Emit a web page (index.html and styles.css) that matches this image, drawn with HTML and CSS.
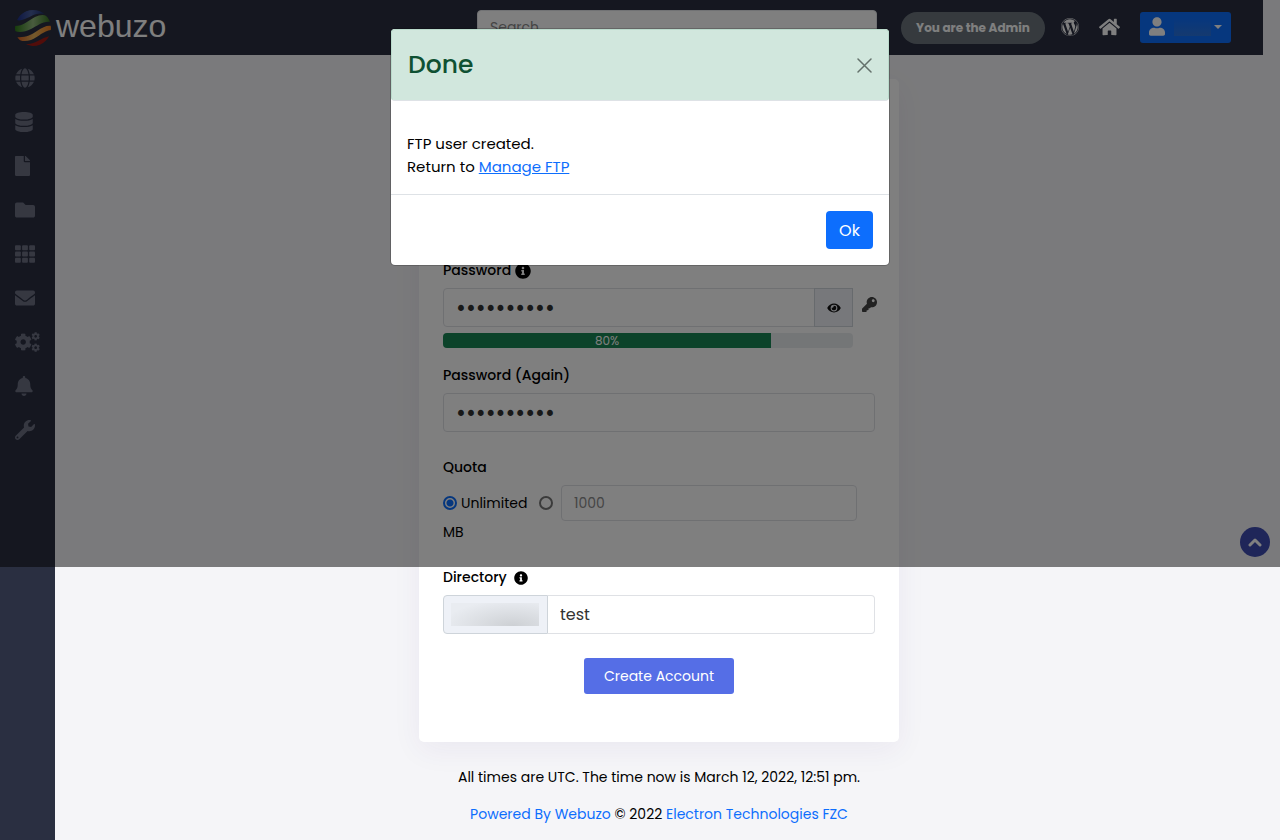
FILE: index.html
```
<!DOCTYPE html>
<html lang="en">
<head>
    <meta charset="UTF-8">
    <meta name="viewport" content="width=device-width, initial-scale=1.0">
    <title>Add FTP Account</title>
    <link rel="stylesheet" href="styles.css">
</head>
<body>
    <!-- icons used more than once or too long to keep in the markup -->
    <svg class="sprite" aria-hidden="true">
        <symbol id="globe" viewBox="0 0 496 512"><path d="M336.500 160C322 70.700 287.800 8 248 8s-74 62.700-88.500 152h177zM152 256c0 22.200 1.200 43.500 3.300 64h185.300c2.100-20.500 3.300-41.800 3.300-64s-1.200-43.500-3.300-64H155.300c-2.100 20.500-3.300 41.800-3.300 64zm324.700-96c-28.600-67.900-86.500-120.400-158-141.600 24.400 33.800 41.200 84.700 50 141.600h108zM177.200 18.400C105.800 39.600 47.800 92.100 19.300 160h108c8.700-56.900 25.500-107.800 49.900-141.600zM487.400 192H372.700c2.100 21 3.300 42.500 3.300 64s-1.200 43-3.300 64h114.600c5.500-20.500 8.600-41.800 8.600-64s-3.100-43.500-8.500-64zM120 256c0-21.500 1.200-43 3.300-64H8.600C3.200 212.500 0 233.800 0 256s3.200 43.500 8.600 64h114.600c-2-21-3.200-42.500-3.200-64zm39.500 96c14.500 89.300 48.700 152 88.500 152s74-62.700 88.500-152h-177zm159.300 141.600c71.400-21.200 129.400-73.700 158-141.600h-108c-8.800 56.900-25.600 107.800-50 141.600zM19.300 352c28.600 67.900 86.500 120.400 158 141.600-24.400-33.800-41.200-84.700-50-141.600h-108z"/></symbol>
        <symbol id="database" viewBox="0 0 448 512"><path d="M448 73.143v45.714C448 159.143 347.667 192 224 192S0 159.143 0 118.857V73.143C0 32.857 100.333 0 224 0s224 32.857 224 73.143zM448 176v102.857C448 319.143 347.667 352 224 352S0 319.143 0 278.857V176c48.125 33.143 136.208 48.572 224 48.572S399.874 209.143 448 176zm0 160v102.857C448 479.143 347.667 512 224 512S0 479.143 0 438.857V336c48.125 33.143 136.208 48.572 224 48.572S399.874 369.143 448 336z"/></symbol>
        <symbol id="file" viewBox="0 0 384 512"><path d="M224 136V0H24C10.700 0 0 10.700 0 24v464c0 13.300 10.700 24 24 24h336c13.300 0 24-10.700 24-24V160H248c-13.200 0-24-10.800-24-24zm160-14.100v6.100H256V0h6.100c6.400 0 12.500 2.500 17 7l97.900 98c4.500 4.500 7 10.600 7 16.900z"/></symbol>
        <symbol id="folder" viewBox="0 0 512 512"><path d="M464 128H272l-64-64H48C21.490 64 0 85.490 0 112v288c0 26.510 21.490 48 48 48h416c26.510 0 48-21.490 48-48V176c0-26.510-21.490-48-48-48z"/></symbol>
        <symbol id="grid" viewBox="0 0 512 512"><rect y="32" width="149" height="128" rx="24"/><rect x="181" y="32" width="149" height="128" rx="24"/><rect x="363" y="32" width="149" height="128" rx="24"/><rect y="192" width="149" height="128" rx="24"/><rect x="181" y="192" width="149" height="128" rx="24"/><rect x="363" y="192" width="149" height="128" rx="24"/><rect y="352" width="149" height="128" rx="24"/><rect x="181" y="352" width="149" height="128" rx="24"/><rect x="363" y="352" width="149" height="128" rx="24"/></symbol>
        <symbol id="envelope" viewBox="0 0 512 512"><path d="M502.300 190.800c3.900-3.100 9.700-.2 9.700 4.700V400c0 26.500-21.500 48-48 48H48c-26.500 0-48-21.500-48-48V195.600c0-5 5.700-7.800 9.700-4.700 22.400 17.400 52.100 39.500 154.100 113.600 21.100 15.400 56.700 47.800 92.200 47.600 35.700.3 72-32.800 92.300-47.600 102-74.100 131.600-96.300 154-113.700zM256 320c23.200.4 56.600-29.200 73.400-41.400 132.700-96.300 142.800-104.700 173.400-128.700 5.800-4.500 9.200-11.500 9.200-18.900v-19c0-26.500-21.500-48-48-48H48c-26.500 0-48 21.500-48 48v19c0 7.400 3.400 14.300 9.200 18.900 30.600 23.900 40.700 32.400 173.400 128.700 16.800 12.200 50.200 41.800 73.400 41.400z"/></symbol>
        <symbol id="cog" viewBox="0 0 512 512"><path d="M487.400 315.700l-42.600-24.600c4.300-23.200 4.300-47 0-70.200l42.600-24.600c4.900-2.800 7.100-8.600 5.500-14-11.100-35.600-30-67.800-54.700-94.600-3.800-4.100-10-5.100-14.800-2.300L380.800 110c-17.900-15.400-38.500-27.300-60.800-35.100V25.800c0-5.600-3.900-10.500-9.400-11.700-36.700-8.200-74.300-7.800-109.200 0-5.500 1.200-9.400 6.100-9.400 11.700V75c-22.200 7.900-42.800 19.800-60.800 35.100L88.700 85.500c-4.900-2.800-11-1.900-14.800 2.300-24.700 26.700-43.600 58.900-54.700 94.600-1.700 5.400.6 11.200 5.500 14L67.300 221c-4.300 23.200-4.300 47 0 70.200l-42.600 24.600c-4.900 2.800-7.100 8.600-5.500 14 11.100 35.600 30 67.800 54.700 94.600 3.800 4.100 10 5.100 14.800 2.300l42.600-24.600c17.900 15.400 38.500 27.300 60.800 35.100v49.200c0 5.600 3.900 10.500 9.400 11.700 36.700 8.200 74.300 7.800 109.200 0 5.500-1.200 9.400-6.100 9.400-11.700v-49.200c22.200-7.900 42.800-19.800 60.800-35.100l42.600 24.600c4.900 2.800 11 1.900 14.800-2.300 24.700-26.700 43.600-58.900 54.700-94.600 1.500-5.500-.7-11.300-5.600-14.100zM256 336c-44.100 0-80-35.900-80-80s35.900-80 80-80 80 35.900 80 80-35.900 80-80 80z"/></symbol>
        <symbol id="cogs" viewBox="0 0 640 512"><use href="#cog" x="-14" y="32" width="448" height="448"/><use href="#cog" x="418" y="0" width="222" height="222"/><use href="#cog" x="418" y="290" width="222" height="222"/></symbol>
        <symbol id="bell" viewBox="0 0 448 512"><path d="M224 512c35.320 0 63.970-28.650 63.970-64H160.030c0 35.350 28.650 64 63.970 64zm215.390-149.710c-19.320-20.760-55.470-51.990-55.470-154.290 0-77.700-54.480-139.900-127.940-155.160V32c0-17.670-14.320-32-31.980-32s-31.980 14.330-31.980 32v20.840C118.560 68.100 64.080 130.300 64.080 208c0 102.300-36.150 133.530-55.470 154.290-6 6.450-8.660 14.160-8.610 21.710.11 16.400 12.980 32 32.100 32h383.800c19.120 0 32-15.600 32.100-32 .05-7.550-2.610-15.270-8.610-21.710z"/></symbol>
        <symbol id="wrench" viewBox="0 0 512 512"><path d="M507.730 109.100c-2.240-9.030-13.540-12.090-20.120-5.510l-74.360 74.360-67.880-11.310-11.310-67.880 74.360-74.360c6.620-6.620 3.430-17.900-5.660-20.160-47.380-11.740-99.550.91-136.580 37.930-39.640 39.640-50.550 97.100-34.050 147.200L18.740 402.760c-24.990 24.990-24.990 65.510 0 90.500 24.990 24.990 65.510 24.990 90.500 0l213.210-213.210c50.120 16.710 107.470 5.680 147.370-34.220 37.070-37.070 49.700-89.320 37.910-136.730zM64 472c-13.250 0-24-10.750-24-24 0-13.260 10.750-24 24-24s24 10.740 24 24c0 13.250-10.750 24-24 24z"/></symbol>
        <symbol id="info" viewBox="0 0 512 512"><path d="M256 8C119.043 8 8 119.083 8 256c0 136.997 111.043 248 248 248s248-111.003 248-248C504 119.083 392.957 8 256 8zm0 110c23.196 0 42 18.804 42 42s-18.804 42-42 42-42-18.804-42-42 18.804-42 42-42zm56 254c0 6.627-5.373 12-12 12h-88c-6.627 0-12-5.373-12-12v-24c0-6.627 5.373-12 12-12h12v-64h-12c-6.627 0-12-5.373-12-12v-24c0-6.627 5.373-12 12-12h64c6.627 0 12 5.373 12 12v100h12c6.627 0 12 5.373 12 12v24z"/></symbol>
    </svg>

    <header class="topbar">
        <a href="#" class="logo">
            <svg width="38" height="38" viewBox="0 0 38 38" aria-hidden="true">
                <defs>
                    <linearGradient id="green"><stop offset="0" stop-color="#2f7a18"/><stop offset=".5" stop-color="#93b87e"/><stop offset="1" stop-color="#2f6d1a"/></linearGradient>
                    <linearGradient id="orange"><stop offset="0" stop-color="#d8591c"/><stop offset=".5" stop-color="#e8b55c"/><stop offset="1" stop-color="#ee7a1c"/></linearGradient>
                    <linearGradient id="blue"><stop offset="0" stop-color="#1c2f8a"/><stop offset=".5" stop-color="#4a5f9c"/><stop offset="1" stop-color="#1b2c70"/></linearGradient>
                    <clipPath id="ball"><circle cx="19" cy="19" r="18"/></clipPath>
                </defs>
                <g clip-path="url(#ball)">
                    <path fill="url(#blue)" d="M3 11C8 0 24-4 31 5 23 3 18 7 11 10 8 11 5 12 3 11z"/>
                    <path fill="url(#green)" d="M1 17C9 17 14 12 21 8 27 5 33 5 35 10L37 13C28 12 24 17 17 20 11 23 5 24 1 22z"/>
                    <path fill="url(#orange)" d="M2 28C11 29 17 26 23 22 29 18 33 16 38 17L38 21C30 21 25 28 17 31 11 33 6 32 4 30z"/>
                    <path fill="#a51b14" d="M12 35C21 36 26 29 36 27 33 38 19 39 12 35z"/>
                </g>
            </svg>
            <span>webuzo</span>
        </a>
        <input type="search" class="search" placeholder="Search" aria-label="Search">
        <span class="role">You are the Admin</span>
        <a href="#" class="top-link" aria-label="WordPress">
            <svg width="18" height="18" viewBox="8 8 496 496"><path d="M61.700 169.400l101.500 278C92.200 413 43.300 340.200 43.300 256c0-30.900 6.600-60.100 18.400-86.600zm337.900 75.900c0-26.300-9.400-44.500-17.500-58.700-10.800-17.500-20.900-32.400-20.900-49.900 0-19.600 14.800-37.800 35.700-37.800.9 0 1.800.1 2.800.2-37.900-34.700-88.300-55.900-143.700-55.900-74.300 0-139.700 38.100-177.800 95.900 5 .2 9.700.3 13.700.3 22.200 0 56.700-2.700 56.700-2.700 11.500-.7 12.800 16.200 1.400 17.500 0 0-11.500 1.300-24.300 2l77.500 230.400L249.800 247l-33.100-90.800c-11.500-.7-22.300-2-22.300-2-11.500-.7-10.100-18.200 1.300-17.500 0 0 35.100 2.700 56 2.700 22.200 0 56.700-2.700 56.700-2.700 11.500-.7 12.800 16.200 1.400 17.500 0 0-11.500 1.300-24.300 2l76.900 228.700 21.200-70.900c9-29.400 16-50.500 16-68.700zm-139.900 29.300l-63.800 185.500c19.100 5.600 39.200 8.700 60.100 8.700 24.800 0 48.500-4.300 70.600-12.100-.6-.9-1.100-1.900-1.500-2.900l-65.400-179.200zm183-120.700c.9 6.800 1.400 14 1.400 21.900 0 21.600-4 45.800-16.200 76.200l-65 187.900C426.200 403 468.700 334.400 468.700 256c0-37-9.400-71.800-26-102.100zM504 256c0 136.800-111.300 248-248 248C119.200 504 8 392.700 8 256 8 119.200 119.200 8 256 8c136.700 0 248 111.200 248 248zm-11.400 0c0-130.500-106.200-236.600-236.600-236.600C125.500 19.400 19.400 125.500 19.400 256S125.600 492.600 256 492.600c130.500 0 236.600-106.100 236.600-236.600z"/></svg>
        </a>
        <a href="#" class="top-link" aria-label="Home">
            <svg width="21" height="18" viewBox="0 8 576 496"><path d="M280.370 148.260L96 300.110V464a16 16 0 0 0 16 16l112.060-.29a16 16 0 0 0 15.920-16V368a16 16 0 0 1 16-16h64a16 16 0 0 1 16 16v95.640a16 16 0 0 0 16 16.050L464 480a16 16 0 0 0 16-16V300L295.670 148.260a12.190 12.190 0 0 0-15.300 0zM571.600 251.470L488 182.560V44.050a12 12 0 0 0-12-12h-56a12 12 0 0 0-12 12v72.610L318.470 43a48 48 0 0 0-61 0L4.340 251.470a12 12 0 0 0-1.600 16.900l25.500 31A12 12 0 0 0 45.150 301l235.220-193.740a12.190 12.190 0 0 1 15.300 0L530.900 301a12 12 0 0 0 16.900-1.600l25.500-31a12 12 0 0 0-1.700-16.930z"/></svg>
        </a>
        <button type="button" class="user-menu" aria-label="Account">
            <svg width="16" height="19" viewBox="0 0 448 512"><path d="M224 256c70.700 0 128-57.300 128-128S294.700 0 224 0 96 57.300 96 128s57.300 128 128 128zm89.600 32h-16.700c-22.200 10.200-46.900 16-72.900 16s-50.600-5.800-72.900-16h-16.700C60.200 288 0 348.200 0 422.400V464c0 26.500 21.500 48 48 48h352c26.500 0 48-21.500 48-48v-41.600c0-74.200-60.200-134.400-134.400-134.400z"/></svg>
            <span class="user-name"></span>
            <span class="caret"></span>
        </button>
    </header>

    <div class="wrapper">
        <nav class="sidebar">
            <a href="#" aria-label="Domain"><svg width="20" height="20"><use href="#globe"/></svg></a>
            <a href="#" aria-label="Database"><svg width="18" height="20"><use href="#database"/></svg></a>
            <a href="#" aria-label="FTP"><svg width="15" height="20"><use href="#file"/></svg></a>
            <a href="#" aria-label="Files"><svg width="20" height="20"><use href="#folder"/></svg></a>
            <a href="#" aria-label="Apps"><svg width="20" height="20"><use href="#grid"/></svg></a>
            <a href="#" aria-label="Email"><svg width="20" height="20"><use href="#envelope"/></svg></a>
            <a href="#" aria-label="Settings"><svg width="25" height="20"><use href="#cogs"/></svg></a>
            <a href="#" aria-label="Notifications"><svg width="18" height="20"><use href="#bell"/></svg></a>
            <a href="#" aria-label="Utilities"><svg width="20" height="20"><use href="#wrench"/></svg></a>
        </nav>

        <main class="content">
            <form class="card">
                <div class="field">
                    <label for="pass">Password <svg width="16" height="16"><use href="#info"/></svg></label>
                    <div class="pass-row">
                        <div class="pass-box">
                            <div class="input-group">
                                <input type="password" id="pass" value="ftpuser123">
                                <button type="button" class="addon" aria-label="Show password">
                                    <svg width="14" height="12" viewBox="0 0 576 512"><path d="M572.520 241.400C518.290 135.590 410.930 64 288 64S57.680 135.640 3.480 241.410a32.350 32.350 0 0 0 0 29.190C57.710 376.410 165.070 448 288 448s230.320-71.640 284.520-177.410a32.350 32.350 0 0 0 0-29.190zM288 400a144 144 0 1 1 144-144 143.930 143.930 0 0 1-144 144zm0-240a95.310 95.310 0 0 0-25.310 3.790 47.850 47.850 0 0 1-66.900 66.900A95.780 95.780 0 1 0 288 160z"/></svg>
                                </button>
                            </div>
                            <div class="progress"><div class="progress-bar" style="width: 80%">80%</div></div>
                        </div>
                        <a href="#" class="key" aria-label="Generate password">
                            <svg width="15" height="15" viewBox="0 0 512 512"><path d="M512 176.001C512 273.203 433.202 352 336 352c-11.220 0-22.190-1.062-32.827-3.069l-24.012 27.014A23.999 23.999 0 0 1 261.223 384H224v40c0 13.255-10.745 24-24 24h-40v40c0 13.255-10.745 24-24 24H24c-13.255 0-24-10.745-24-24v-78.059c0-6.365 2.529-12.470 7.029-16.971l161.802-161.802C163.108 213.814 160 195.271 160 176 160 78.798 238.797.001 335.999 0 433.488-.001 512 78.511 512 176.001zM336 128c0 26.510 21.490 48 48 48s48-21.490 48-48-21.490-48-48-48-48 21.490-48 48z"/></svg>
                        </a>
                    </div>
                </div>
                <div class="field field-wide">
                    <label for="pass2">Password (Again)</label>
                    <input type="password" id="pass2" value="ftpuser123">
                </div>
                <div class="field">
                    <div class="label">Quota</div>
                    <div class="quota">
                        <input type="radio" name="quota" id="unlimited" checked>
                        <label for="unlimited">Unlimited</label>
                        <input type="radio" name="quota" id="limited" aria-label="Limited quota">
                        <input type="text" class="quota-size" placeholder="1000" aria-label="Quota in MB">
                        <span>MB</span>
                    </div>
                </div>
                <div class="field field-wide">
                    <label for="dir">Directory&nbsp;<svg width="14" height="14"><use href="#info"/></svg></label>
                    <div class="input-group">
                        <span class="home-dir"><span></span></span>
                        <input type="text" id="dir" value="test">
                    </div>
                </div>
                <button type="submit" class="create">Create Account</button>
            </form>

            <footer class="footer">
                <p>All times are UTC. The time now is March 12, 2022, 12:51 pm.</p>
                <p><a href="#">Powered By Webuzo</a> © 2022 <a href="#">Electron Technologies FZC</a></p>
            </footer>
        </main>
    </div>

    <div class="backdrop">
        <a href="#" class="to-top" aria-label="Back to top">
            <svg width="14" height="10" viewBox="0 0 14 10"><path d="M2 8l5-5 5 5" fill="none" stroke="currentColor" stroke-width="3" stroke-linecap="round" stroke-linejoin="round"/></svg>
        </a>
        <div class="modal" role="dialog" aria-labelledby="modal-title">
            <div class="modal-header">
                <h4 id="modal-title">Done</h4>
                <button type="button" class="close" aria-label="Close">
                    <svg width="16" height="16" viewBox="0 0 16 16"><path d="M2 2l13 13M15 2L2 15" stroke="currentColor" stroke-width="1.500" stroke-linecap="round"/></svg>
                </button>
            </div>
            <div class="modal-body">
                <p>FTP user created.</p>
                <p>Return to <a href="#">Manage FTP</a></p>
            </div>
            <div class="modal-footer">
                <button type="button" class="ok">Ok</button>
            </div>
        </div>
    </div>
</body>
</html>
```
FILE: styles.css
```
* {
    box-sizing: border-box;
}

body {
    font-family: Poppins, Inter, sans-serif;
    font-size: 14px;
    line-height: 23px;
    background-color: #f5f5f8;
    margin: 0;
    color: #000;
    min-height: 100vh;
    display: flex;
    flex-direction: column;
}

svg {
    fill: currentColor;
    flex-shrink: 0;
}

a {
    color: #0d6efd;
    text-decoration: none;
}

p {
    margin: 0;
}

button,
input {
    font-family: inherit;
}

.sprite {
    position: absolute;
    width: 0;
    height: 0;
}

/* top bar */
.topbar {
    display: flex;
    align-items: center;
    height: 55px;
    margin-right: 17px;
    padding: 0 32px 0 14px;
    background-color: #2a2f41;
}

.logo {
    display: flex;
    align-items: center;
    gap: 4px;
    margin-right: auto;
    font-family: "Liberation Sans", sans-serif;
    font-size: 32px;
    line-height: 50px;
    color: #fff;
}

.logo span {
    padding-bottom: 4px;
}

.search {
    width: 400px;
    height: 36px;
    padding: 0 12px;
    border: 1px solid #e2e5e8;
    border-radius: 4px;
    background-color: #fff;
    font-size: 14px;
}

.role {
    width: 144px;
    margin: 0 16px 0 24px;
    border-radius: 16px;
    background-color: #6c757d;
    color: #fff;
    font-size: 12px;
    font-weight: 700;
    line-height: 32px;
    text-align: center;
}

.top-link {
    display: flex;
    margin-right: 20px;
    padding-bottom: 2px;
    color: #fff;
}

.user-menu {
    display: flex;
    align-items: center;
    gap: 9px;
    width: 91px;
    height: 31px;
    padding: 0 9px 2px;
    border: 0;
    border-radius: 3px;
    background-color: #0d6efd;
    color: #fff;
}

.user-name {
    flex: 1;
    height: 18px;
    background: linear-gradient(to top, #2a74df, #0d6efd);
}

.caret {
    margin-left: -6px;
    border: 4px solid transparent;
    border-top-color: #fff;
    border-bottom: 0;
}

/* page */
.wrapper {
    display: flex;
    flex: 1;
}

.sidebar {
    width: 55px;
    padding-top: 1px;
    background-color: #2a2f41;
}

.sidebar a {
    display: flex;
    align-items: center;
    height: 44px;
    padding-left: 15px;
    color: #6c7083;
}

.content {
    flex: 1;
    display: flex;
    flex-direction: column;
    align-items: center;
    padding: 24px 17px 0 0;
}

.card {
    display: flex;
    flex-direction: column;
    width: 480px;
    padding: 180px 24px 48px;
    border-radius: 5px;
    background-color: #fff;
    box-shadow: 0 8px 30px rgba(60, 40, 120, 0.06);
}

.field {
    margin-bottom: 16px;
}

.field-wide {
    margin-bottom: 24px;
}

.field > label,
.label {
    display: flex;
    align-items: center;
    gap: 4px;
    margin-bottom: 6px;
    font-weight: 500;
}

input[type="text"],
input[type="password"] {
    display: block;
    width: 100%;
    height: 39px;
    padding: 0 12px;
    border: 1px solid #dfe1e5;
    border-radius: 4px;
    background-color: #fff;
    color: #333;
    font-size: 16px;
}

/* bigger bullets */
input[type="password"] {
    font-size: 24px;
}

::placeholder {
    color: #8a8a8a;
}

.pass-row {
    display: flex;
    gap: 9px;
    margin-right: -2px;
}

.pass-box {
    flex: 1;
}

.key {
    padding-top: 8px;
    color: #444;
}

.input-group {
    display: flex;
}

.input-group input:first-child {
    border-radius: 4px 0 0 4px;
}

.input-group input:last-child {
    border-left: 0;
    border-radius: 0 4px 4px 0;
}

.addon {
    display: flex;
    align-items: center;
    justify-content: center;
    flex-shrink: 0;
    width: 39px;
    margin-left: -1px;
    border: 1px solid #ced4da;
    background-color: #eef0f6;
    color: #111;
}

.progress {
    height: 15px;
    margin-top: 6px;
    border-radius: 4px;
    overflow: hidden;
    background-color: #e9ecef;
}

.progress-bar {
    background-color: #198754;
    color: #fff;
    font-size: 12px;
    line-height: 15px;
    text-align: center;
}

.quota {
    display: flex;
    flex-wrap: wrap;
    align-items: center;
    padding-bottom: 6px;
}

.quota input[type="radio"] {
    appearance: none;
    width: 14px;
    height: 14px;
    margin: 0;
    border: 2px solid #767676;
    border-radius: 50%;
    background-color: #fff;
}

.quota input[type="radio"]:checked {
    border-color: #0d6efd;
    background: radial-gradient(circle, #0d6efd 3px, #fff 4px);
}

.quota label {
    width: 78px;
    margin-left: 4px;
}

.quota .quota-size {
    width: 296px;
    height: 36px;
    margin: 0 17px 0 8px;
    font-size: 14px;
}

.home-dir {
    width: 105px;
    flex-shrink: 0;
    padding: 7px 8px 7px 7px;
    border: 1px solid #ced4da;
    border-radius: 4px 0 0 4px;
    background-color: #eef1f7;
}

.home-dir span {
    display: block;
    height: 23px;
    background: radial-gradient(ellipse at 70% 100%, #cdd0d4, #e9ecf1 80%);
}

.create {
    align-self: center;
    width: 150px;
    height: 36px;
    border: 0;
    border-radius: 3px;
    background-color: #556ee6;
    color: #fff;
    font-size: 14px;
}

.footer {
    padding: 24px 0 14px;
    text-align: center;
}

.footer p + p {
    margin-top: 14px;
}

/* modal */
.backdrop {
    position: absolute;
    top: 0;
    left: 0;
    width: 100%;
    height: 67.5vh;
    background-color: rgba(0, 0, 0, 0.5);
}

.to-top {
    position: absolute;
    right: 10px;
    bottom: 10px;
    display: flex;
    align-items: center;
    justify-content: center;
    width: 30px;
    height: 30px;
    border-radius: 50%;
    background-color: #1f2659;
    color: #808080;
}

.modal {
    max-width: 500px;
    margin: 28px auto;
    border: 1px solid rgba(0, 0, 0, 0.2);
    border-radius: 5px;
    background-color: #fff;
    background-clip: padding-box;
}

.modal-header {
    display: flex;
    align-items: center;
    justify-content: space-between;
    height: 72px;
    padding: 0 16px;
    border: 1px solid #badbcc;
    border-bottom-color: #dee2e6;
    border-radius: 4px;
    background-color: #d1e7dd;
    color: #0f5132;
}

.modal-header h4 {
    margin: 0;
    font-size: 25px;
    font-weight: 500;
    line-height: 30px;
}

.close {
    display: flex;
    padding: 0;
    border: 0;
    background: none;
    color: #64716b;
}

.modal-body {
    padding: 31px 16px 16px;
    font-size: 15px;
    line-height: 23px;
}

.modal-body a {
    text-decoration: underline;
}

.modal-footer {
    display: flex;
    justify-content: flex-end;
    padding: 16px;
    border-top: 1px solid #dee2e6;
}

.ok {
    width: 47px;
    height: 38px;
    border: 0;
    border-radius: 4px;
    background-color: #0d6efd;
    color: #fff;
    font-size: 16px;
}
```
